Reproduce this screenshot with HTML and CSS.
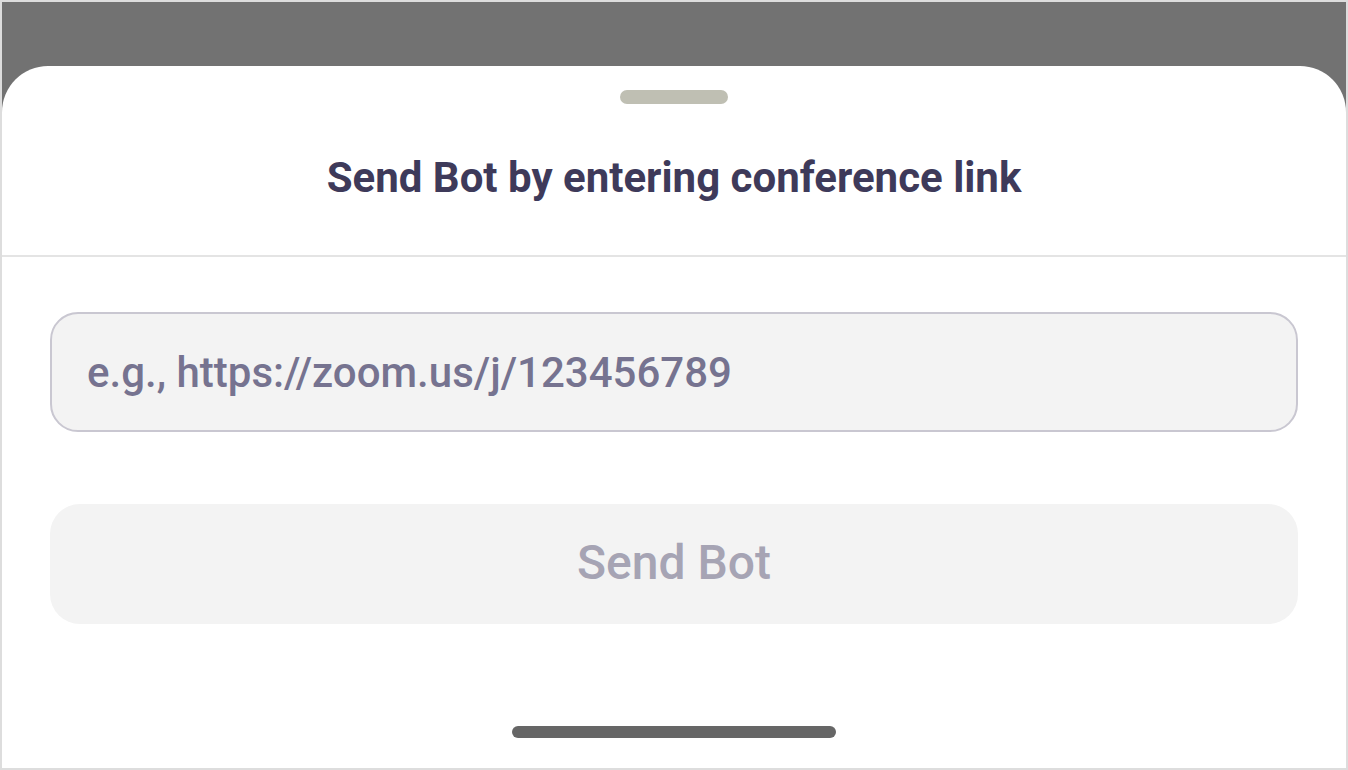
FILE: index.html
```html
<!DOCTYPE html>
<html lang="en">
<head>
<meta charset="utf-8">
<title>Send Bot</title>
<link rel="stylesheet" href="styles.css">
</head>
<body>
<div class="frame">
  <div class="sheet">
    <div class="sheet-header">
      <div class="handle"></div>
      <h1 class="title">Send Bot by entering conference link</h1>
    </div>
    <div class="sheet-body">
      <input class="link-input" type="text" placeholder="e.g., https://zoom.us/j/123456789">
      <button class="send-btn" type="button">Send Bot</button>
    </div>
    <div class="home-indicator"></div>
  </div>
</div>
</body>
</html>
```
FILE: styles.css
```css
* { box-sizing: border-box; }
html, body { margin: 0; padding: 0; }
body {
  font-family: Roboto, "Liberation Sans", Arial, sans-serif;
  background: #ffffff;
}
.frame {
  width: 1348px;
  height: 770px;
  border: 2px solid #dddddd;
  background: #727272;
  display: flex;
  flex-direction: column;
}
.sheet {
  margin-top: 64px;
  flex: 1;
  background: #ffffff;
  border-radius: 46px 46px 0 0;
  display: flex;
  flex-direction: column;
  align-items: stretch;
}
.sheet-header {
  display: flex;
  flex-direction: column;
  align-items: center;
  padding-top: 24px;
  padding-bottom: 49px;
  border-bottom: 2px solid #e4e4e4;
}
.handle {
  width: 108px;
  height: 14px;
  border-radius: 7px;
  background: #bfbfb3;
}
.title {
  margin: 46px 0 0;
  font-size: 42px;
  line-height: 56px;
  font-weight: 700;
  color: #3e3a5a;
  text-align: center;
}
.sheet-body {
  padding: 55px 48px 0;
  display: flex;
  flex-direction: column;
  gap: 72px;
}
.link-input {
  width: 100%;
  height: 120px;
  border: 2px solid #c9c7d1;
  border-radius: 28px;
  background: #f3f3f3;
  padding: 0 35px;
  font-family: inherit;
  font-size: 42px;
  font-weight: 500;
  color: #3e3a5a;
  outline: none;
}
.link-input::placeholder {
  color: #767390;
  opacity: 1;
}
.send-btn {
  width: 100%;
  height: 120px;
  border: none;
  border-radius: 30px;
  background: #f3f3f3;
  font-family: inherit;
  font-size: 48px;
  font-weight: 500;
  color: #a6a4b4;
  padding: 0 0 4px;
}
.home-indicator {
  align-self: center;
  margin-top: 102px;
  width: 324px;
  height: 12px;
  border-radius: 6px;
  background: #666666;
}
```
